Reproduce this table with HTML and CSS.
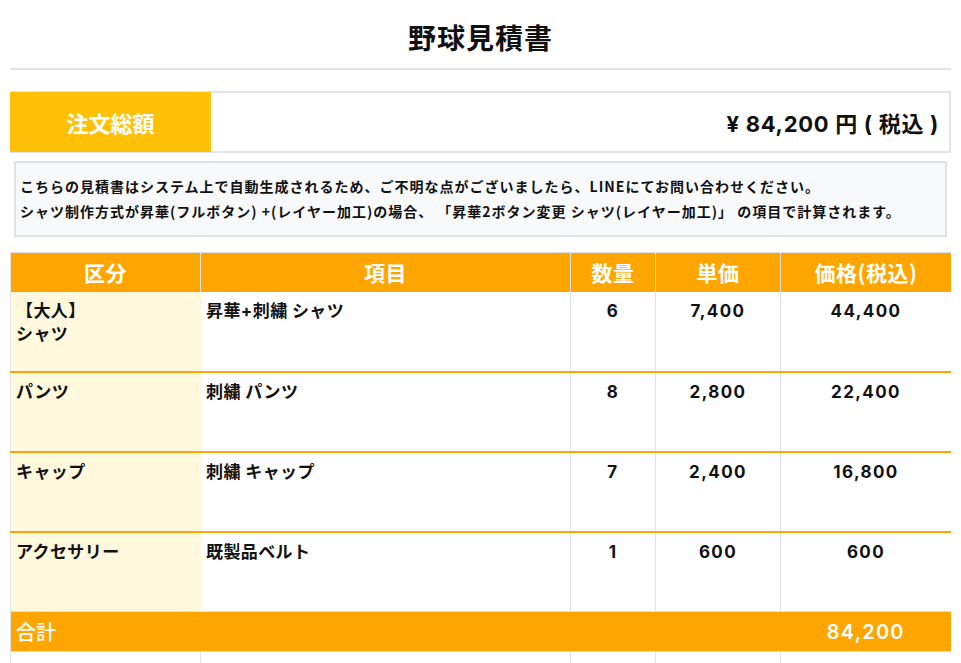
FILE: index.html
```html
<!DOCTYPE html>
<html lang="ja">
<head>
<meta charset="utf-8">
<title>野球見積書</title>
<link rel="stylesheet" href="styles.css">
</head>
<body>
<header class="page-head">
  <h1 class="title">野球見積書</h1>
</header>

<section class="summary">
  <div class="summary-label">注文総額</div>
  <div class="summary-value">¥ 84,200 円 ( 税込 )</div>
</section>

<section class="notice">
  <p>こちらの見積書はシステム上で自動生成されるため、ご不明な点がございましたら、LINEにてお問い合わせください。</p>
  <p>シャツ制作方式が昇華(フルボタン) +(レイヤー加工)の場合、 「昇華2ボタン変更 シャツ(レイヤー加工)」 の項目で計算されます。</p>
</section>

<table class="quote">
  <colgroup>
    <col class="c-cat"><col class="c-item"><col class="c-qty"><col class="c-unit"><col class="c-price">
  </colgroup>
  <thead>
    <tr><th>区分</th><th>項目</th><th>数量</th><th>単価</th><th>価格(税込)</th></tr>
  </thead>
  <tbody>
    <tr>
      <td class="cat">【大人】<br>シャツ</td>
      <td class="item">昇華+刺繍 シャツ</td>
      <td class="num">6</td>
      <td class="num">7,400</td>
      <td class="num">44,400</td>
    </tr>
    <tr>
      <td class="cat">パンツ</td>
      <td class="item">刺繍 パンツ</td>
      <td class="num">8</td>
      <td class="num">2,800</td>
      <td class="num">22,400</td>
    </tr>
    <tr>
      <td class="cat">キャップ</td>
      <td class="item">刺繍 キャップ</td>
      <td class="num">7</td>
      <td class="num">2,400</td>
      <td class="num">16,800</td>
    </tr>
    <tr>
      <td class="cat">アクセサリー</td>
      <td class="item">既製品ベルト</td>
      <td class="num">1</td>
      <td class="num">600</td>
      <td class="num">600</td>
    </tr>
  </tbody>
  <tfoot>
    <tr class="total">
      <td colspan="4" class="total-label">合計</td>
      <td class="total-value">84,200</td>
    </tr>
    <tr class="blank">
      <td></td><td></td><td></td><td></td><td></td>
    </tr>
  </tfoot>
</table>
</body>
</html>
```

FILE: styles.css
```css
* { box-sizing: border-box; }

body {
  margin: 10px;
  font-family: Inter, "Noto Sans CJK JP", sans-serif;
  color: #111;
  background: #fff;
}

.page-head {
  padding: 7px 0 11px;
  border-bottom: 2px solid #e1e5e9;
  margin-bottom: 21px;
}

.title {
  margin: 0;
  font-family: "Noto Sans CJK JP", sans-serif;
  font-size: 28px;
  line-height: 40px;
  font-weight: 700;
  text-align: center;
  letter-spacing: 1px;
}

.summary {
  display: flex;
  height: 62px;
  border: 2px solid #e1e5e9;
  border-left: 0;
}

.summary-label {
  width: 201px;
  margin-top: -1px;
  margin-bottom: -1px;
  background: #ffc107;
  color: #fff;
  font-family: "Noto Sans CJK JP", sans-serif;
  font-weight: 700;
  font-size: 22px;
  display: flex;
  align-items: center;
  justify-content: center;
}

.summary-value {
  flex: 1;
  display: flex;
  align-items: center;
  justify-content: flex-end;
  padding-right: 10px;
  font-size: 22px;
  font-weight: 700;
  letter-spacing: 0.7px;
}

.notice {
  margin: 8px 4px 15px;
  padding: 11px 4px;
  background: #f8f9fa;
  border: 2px solid #dee2e6;
}

.notice p {
  margin: 0;
  font-family: "Noto Sans CJK JP", sans-serif;
  font-weight: 700;
  font-size: 14px;
  line-height: 25px;
  letter-spacing: 1px;
}

.quote {
  width: 100%;
  border-collapse: collapse;
  table-layout: fixed;
  border: 1px solid #dee2e6;
}

.c-cat { width: 190px; }
.c-item { width: 370px; }
.c-qty { width: 85px; }
.c-unit { width: 125px; }
.c-price { width: 171px; }

.quote th {
  background: #ffa500;
  color: #fff;
  height: 39px;
  padding: 0;
  font-family: "Noto Sans CJK JP", sans-serif;
  font-size: 21px;
  font-weight: 700;
  letter-spacing: 0.5px;
  text-align: center;
  border-left: 1px solid #e5e5e5;
}

.quote tbody td {
  height: 80px;
  padding: 8px 5px 0;
  vertical-align: top;
  font-size: 17px;
  line-height: 23px;
  font-weight: 700;
  letter-spacing: 0.4px;
  border-left: 1px solid #dee2e6;
}

.quote tbody tr + tr td {
  border-top: 2px solid #ffa500;
}

.quote td.cat {
  background: #fff8dc;
  padding-left: 5px;
  border-left: 1px solid #dee2e6;
}

.quote td.item {
  border-left: 1px solid #fff8dc;
}

.quote td.num {
  text-align: center;
  letter-spacing: 1.4px;
}

.total td {
  height: 40px;
  background: #ffa500;
  color: #fff;
  border-top: 1px solid #dee2e6;
  border-bottom: 1px solid #dee2e6;
  font-size: 20px;
}

.total-label {
  padding: 0 5px;
  font-family: "Noto Sans CJK JP", sans-serif;
  font-weight: 500;
}

.total-value {
  text-align: center;
  font-weight: 600;
  letter-spacing: 1.2px;
}

.blank td {
  height: 40px;
  border-left: 1px solid #dee2e6;
}
```
